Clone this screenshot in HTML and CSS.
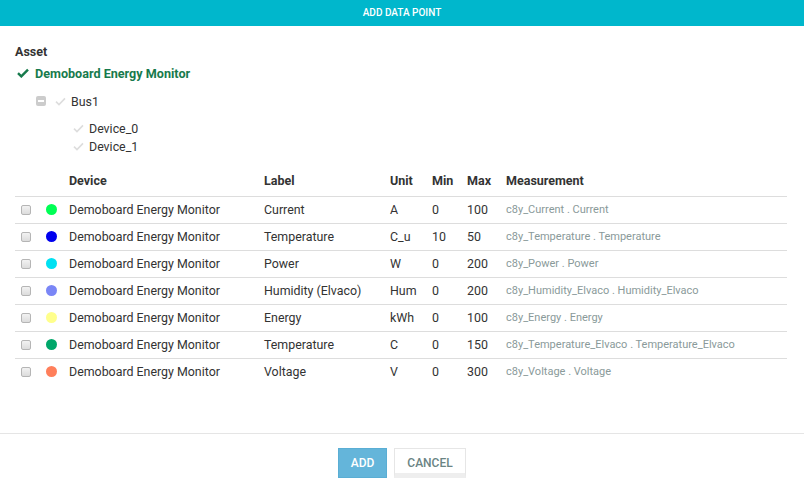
FILE: index.html
```html
<!DOCTYPE html>
<html>
<head>
<meta charset="utf-8">
<link rel="stylesheet" href="styles.css">
</head>
<body>
<div class="modal">
  <div class="title">ADD DATA POINT</div>
  <div class="content">
    <div class="asset-label">Asset</div>
    <div class="tree-root">
      <svg class="check-main" viewBox="0 0 12 10" width="12" height="10"><path d="M1 5.2 L4.3 8.4 L11 1.6" fill="none" stroke="#177a4c" stroke-width="2.4"/></svg>
      <span>Demoboard Energy Monitor</span>
    </div>
    <div class="tree-node">
      <span class="minus-box"><span class="minus"></span></span>
      <svg class="check-light" viewBox="0 0 12 10" width="11" height="9"><path d="M1 5.2 L4.3 8.4 L11 1.6" fill="none" stroke="#dddddd" stroke-width="1.8"/></svg>
      <span>Bus1</span>
    </div>
    <div class="tree-leafs">
      <div class="tree-leaf">
        <svg class="check-light" viewBox="0 0 12 10" width="11" height="9"><path d="M1 5.2 L4.3 8.4 L11 1.6" fill="none" stroke="#dddddd" stroke-width="1.8"/></svg>
        <span>Device_0</span>
      </div>
      <div class="tree-leaf">
        <svg class="check-light" viewBox="0 0 12 10" width="11" height="9"><path d="M1 5.2 L4.3 8.4 L11 1.6" fill="none" stroke="#dddddd" stroke-width="1.8"/></svg>
        <span>Device_1</span>
      </div>
    </div>

    <div class="table">
      <div class="row head">
        <div></div><div></div>
        <div>Device</div><div>Label</div><div>Unit</div><div>Min</div><div>Max</div><div>Measurement</div>
      </div>
      <div class="row">
        <div><span class="cb"></span></div><div><span class="dot c1"></span></div>
        <div>Demoboard Energy Monitor</div><div>Current</div><div>A</div><div>0</div><div>100</div><div class="meas">c8y_Current . Current</div>
      </div>
      <div class="row">
        <div><span class="cb"></span></div><div><span class="dot c2"></span></div>
        <div>Demoboard Energy Monitor</div><div>Temperature</div><div>C_u</div><div>10</div><div>50</div><div class="meas">c8y_Temperature . Temperature</div>
      </div>
      <div class="row">
        <div><span class="cb"></span></div><div><span class="dot c3"></span></div>
        <div>Demoboard Energy Monitor</div><div>Power</div><div>W</div><div>0</div><div>200</div><div class="meas">c8y_Power . Power</div>
      </div>
      <div class="row">
        <div><span class="cb"></span></div><div><span class="dot c4"></span></div>
        <div>Demoboard Energy Monitor</div><div>Humidity (Elvaco)</div><div>Hum</div><div>0</div><div>200</div><div class="meas">c8y_Humidity_Elvaco . Humidity_Elvaco</div>
      </div>
      <div class="row">
        <div><span class="cb"></span></div><div><span class="dot c5"></span></div>
        <div>Demoboard Energy Monitor</div><div>Energy</div><div>kWh</div><div>0</div><div>100</div><div class="meas">c8y_Energy . Energy</div>
      </div>
      <div class="row">
        <div><span class="cb"></span></div><div><span class="dot c6"></span></div>
        <div>Demoboard Energy Monitor</div><div>Temperature</div><div>C</div><div>0</div><div>150</div><div class="meas">c8y_Temperature_Elvaco . Temperature_Elvaco</div>
      </div>
      <div class="row last">
        <div><span class="cb"></span></div><div><span class="dot c7"></span></div>
        <div>Demoboard Energy Monitor</div><div>Voltage</div><div>V</div><div>0</div><div>300</div><div class="meas">c8y_Voltage . Voltage</div>
      </div>
    </div>
  </div>
  <div class="footer">
    <button class="btn primary">ADD</button>
    <button class="btn default">CANCEL</button>
  </div>
</div>
</body>
</html>
```

FILE: styles.css
```css
html, body {
  margin: 0;
  padding: 0;
  background: #ffffff;
}
body {
  font-family: Roboto, "Liberation Sans", sans-serif;
  font-size: 12.4px;
  color: #333333;
  width: 804px;
  height: 492px;
  overflow: hidden;
}
.title {
  height: 26px;
  line-height: 26px;
  background: #00b7cc;
  color: #ffffff;
  text-align: center;
  font-size: 10px;
  font-weight: 500;
}
.content {
  padding: 0 17px 0 15px;
}
.asset-label {
  margin-top: 17px;
  line-height: 18px;
  font-weight: 700;
  font-size: 12.5px;
}
.tree-root {
  margin-top: 3px;
  height: 18px;
  display: flex;
  align-items: center;
  gap: 6px;
  padding-left: 2px;
  color: #177a4c;
  font-weight: 700;
  font-size: 12.6px;
}
.tree-node {
  margin-top: 10px;
  height: 18px;
  display: flex;
  align-items: center;
  padding-left: 21px;
}
.minus-box {
  width: 10px;
  height: 10px;
  background: #cccccc;
  border-radius: 2px;
  display: flex;
  align-items: center;
  justify-content: center;
}
.minus {
  width: 6px;
  height: 2px;
  background: #ffffff;
}
.tree-node .check-light {
  margin-left: 9px;
  margin-right: 5px;
}
.tree-leafs {
  margin-top: 9px;
  padding-left: 58px;
}
.tree-leaf {
  height: 18px;
  display: flex;
  align-items: center;
  gap: 5px;
}
.table {
  margin-top: 11px;
}
.row {
  display: grid;
  grid-template-columns: 31px 23px 195px 126px 42px 35px 39px 1fr;
  height: 25px;
  padding-bottom: 1px;
  align-items: center;
  border-bottom: 1px solid #dddddd;
}
.row.head {
  height: 29px;
  font-weight: 700;
  font-size: 12.5px;
}
.row.last {
  border-bottom: none;
}
.cb {
  display: block;
  margin-left: 6px;
  width: 8px;
  height: 8px;
  border: 1px solid #b5b5b5;
  border-radius: 2px;
  background: linear-gradient(#f2f2f2, #dcdcdc);
}
.dot {
  display: block;
  width: 11px;
  height: 11px;
  border-radius: 50%;
}
.c1 { background: #00ff55; }
.c2 { background: #0000ee; }
.c3 { background: #00e1f2; }
.c4 { background: #7a86f6; }
.c5 { background: #ffff8c; }
.c6 { background: #00a76a; }
.c7 { background: #ff7f5b; }
.meas {
  font-size: 11px;
  color: #8a9a9a;
}
.footer {
  margin-top: 48px;
  border-top: 1px solid #e5e5e5;
  padding-top: 14px;
  display: flex;
  justify-content: center;
  gap: 7px;
}
.btn {
  height: 30px;
  font-family: Roboto, "Liberation Sans", sans-serif;
  font-size: 12px;
  font-weight: 500;
  border-radius: 0;
  padding: 0;
  margin: 0;
}
.btn.primary {
  width: 49px;
  background: #64b5da;
  color: #ffffff;
  border: 1px solid #5aaed4;
}
.btn.default {
  width: 72px;
  background: #ffffff;
  color: #6a8484;
  border: 1px solid #e6e6e6;
  border-bottom: 5px solid #eeeeee;
  padding-top: 4px;
}
```
